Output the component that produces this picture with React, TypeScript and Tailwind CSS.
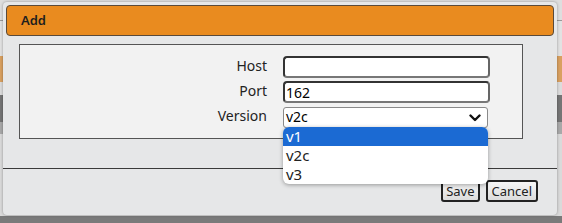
import { useState } from "react";

const font = { fontFamily: '"Noto Sans", "Open Sans", sans-serif' };

function Chevron() {
  return (
    <svg width="12" height="8" viewBox="0 0 12 8" className="shrink-0">
      <path d="M1.5 1.5 L6 6 L10.5 1.5" fill="none" stroke="#111" strokeWidth="2.4" strokeLinecap="round" strokeLinejoin="round" />
    </svg>
  );
}

export default function App() {
  const [host, setHost] = useState("");
  const [port, setPort] = useState("162");
  const options = ["v1", "v2c", "v3"];

  return (
    <div className="relative w-[562px] h-[223px] overflow-hidden bg-[#dcdcdc]" style={font}>
      {/* page behind the dialog */}
      <div className="flex flex-col h-full">
        <div className="h-[21px] bg-[#dedede] border-b border-[#999]" />
        <div className="h-[35px] bg-[#e2e2e2]" />
        <div className="h-[26px] bg-[#d9a060]" />
        <div className="h-[13px] bg-[#dcdcdc]" />
        <div className="h-[27px] bg-[#757575]" />
        <div className="h-[12px] bg-[#a8a8a8]" />
        <div className="flex-1 bg-[#dadada]" />
        <div className="h-[7px] bg-[#7a7a7a]" />
      </div>

      {/* dialog */}
      <div className="absolute left-[3px] top-[2px] w-[554px] h-[213px] rounded-[4px] bg-[#e6e7e8] shadow-[0_0_3px_rgba(0,0,0,0.35)] flex flex-col">
        <div className="mx-[3px] mt-[3px] h-[31px] rounded-[4px] border border-[#5a4a3a] bg-[#e98b1f] flex items-center pl-[14px]">
          <span className="text-[13px] font-semibold text-[#1e1e1e]">Add</span>
        </div>

        <div className="ml-[16px] mt-[8px] w-[504px] h-[95px] border border-[#555] bg-[#f2f2f2] pt-[11px] flex flex-col gap-[3px]">
          <div className="flex items-center h-[22px]">
            <label className="w-[247px] text-right text-[14px] leading-[18px] pb-[3px] text-[#222]">Host</label>
            <input
              value={host}
              onChange={(e) => setHost(e.target.value)}
              className="ml-[16px] w-[207px] h-[22px] rounded-[4px] border-2 border-[#333] border-b-[#777] border-r-[#666] bg-white px-[2px] text-[14px] outline-none"
            />
          </div>
          <div className="flex items-center h-[22px]">
            <label className="w-[247px] text-right text-[14px] leading-[18px] pb-[3px] text-[#222]">Port</label>
            <input
              value={port}
              onChange={(e) => setPort(e.target.value)}
              className="ml-[16px] w-[207px] h-[22px] rounded-[4px] border-2 border-[#333] border-b-[#777] border-r-[#666] bg-white px-[1px] text-[14px] text-black outline-none"
            />
          </div>
          <div className="flex items-center h-[21px] mt-[1px]">
            <label className="w-[247px] text-right text-[14px] leading-[18px] pb-[4px] text-[#222]">Version</label>
            <div className="ml-[16px] w-[205px] h-[21px] rounded-[3px] border border-[#8a8a8a] bg-white flex items-center justify-between pl-[2px] pr-[6px]">
              <span className="text-[14px] leading-[18px] pb-[2px] text-black">v2c</span>
              <Chevron />
            </div>
          </div>
        </div>

        <div className="mt-[29px] border-t border-[#3a3a3a]" />

        <div className="flex justify-end gap-[6px] mt-[11px] pr-[19px]">
          <button className="h-[22px] px-[3px] rounded-[3px] border-2 border-[#222] bg-gradient-to-b from-[#f6f6f6] to-[#dcdcdc] text-[13px] text-[#222] leading-none">
            Save
          </button>
          <button className="h-[22px] px-[4px] rounded-[3px] border-2 border-[#222] bg-gradient-to-b from-[#f6f6f6] to-[#dcdcdc] text-[13px] text-[#222] leading-none">
            Cancel
          </button>
        </div>
      </div>

      {/* open select list */}
      <div className="absolute left-[283px] top-[127px] w-[205px] rounded-[6px] bg-white shadow-[0_1px_4px_rgba(0,0,0,0.35)] overflow-hidden">
        {options.map((o, i) => (
          <div
            key={o}
            className={
              i === 0
                ? "h-[19px] flex items-center pl-[3px] text-[15px] bg-[#1b6ad3] text-white"
                : "h-[19px] flex items-center pl-[3px] text-[15px] text-[#222]"
            }
          >
            {o}
          </div>
        ))}
      </div>
    </div>
  );
}
